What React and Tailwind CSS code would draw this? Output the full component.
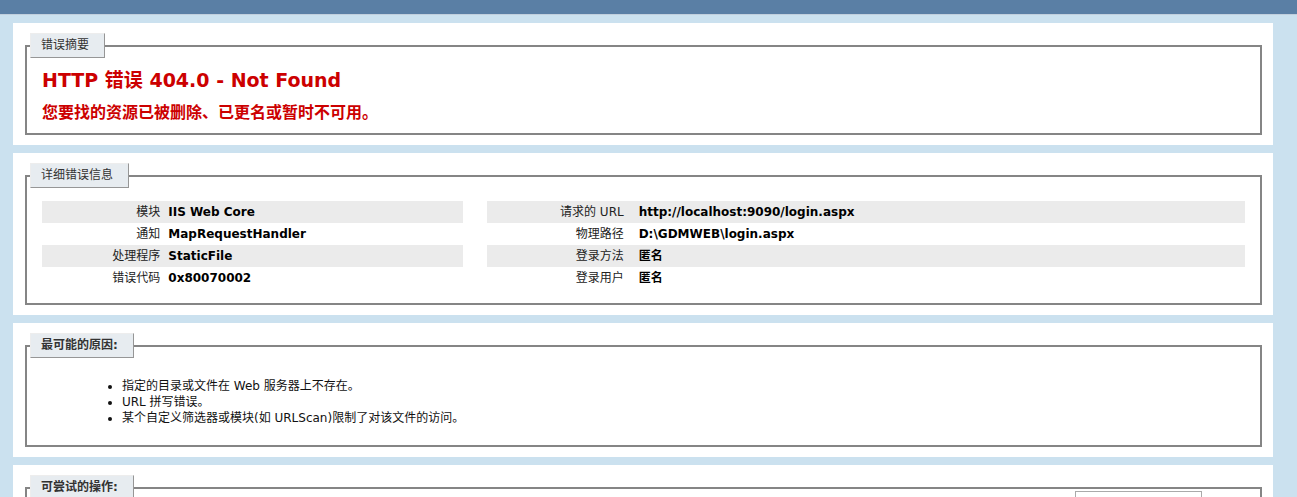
import React from "react";

const detailsLeft = [
  ["模块", "IIS Web Core"],
  ["通知", "MapRequestHandler"],
  ["处理程序", "StaticFile"],
  ["错误代码", "0x80070002"],
];
const detailsRight = [
  ["请求的 URL", "http://localhost:9090/login.aspx"],
  ["物理路径", "D:\\GDMWEB\\login.aspx"],
  ["登录方法", "匿名"],
  ["登录用户", "匿名"],
];

function Legend({ children, bold }) {
  return (
    <legend
      className={
        "ml-[-12px] pl-[10px] pr-[15px] py-[4px] bg-[#E7ECF0] border border-t-[#EDEDED] border-l-[#EDEDED] border-r-[#969696] border-b-[#969696] text-[#333333] text-[12px] leading-[15px] " +
        (bold ? "font-bold" : "font-normal")
      }
    >
      {children}
    </legend>
  );
}

function Table({ rows, thWidth, padRight }) {
  return (
    <div className="mt-[13px] mb-[4px]">
      {rows.map(([k, v], i) => (
        <div key={k} className={"flex py-[3px] " + (i % 2 === 0 ? "bg-[#EBEBEB]" : "")}>
          <div className={"shrink-0 text-right text-[12px] leading-[16px] text-[#222] " + thWidth + " " + padRight}>{k}</div>
          <div className="text-[12px] leading-[16px] font-bold text-black whitespace-nowrap">{v}</div>
        </div>
      ))}
    </div>
  );
}

export default function App() {
  return (
    <div className="min-h-screen bg-[#CBE1EF] font-['DejaVu_Sans','Noto_Sans_CJK_SC',sans-serif] text-black pb-[40px]">
      <div className="h-[15px] bg-[#5A7FA5] border-b border-[#C1CFDD]" />
      <div className="pl-[13px] pr-[24px]">
        {/* Summary */}
        <div className="mt-[8px] bg-white p-[10px]">
          <fieldset className="border-2 border-[#858585] px-[15px] pb-[10px] mx-[2px] mr-[1px]">
            <Legend>错误摘要</Legend>
            <h2 className="mt-[10px] text-[19px] leading-[24px] font-bold text-[#CC0000]">HTTP 错误 404.0 - Not Found</h2>
            <h3 className="mt-[11px] text-[16px] leading-[20px] font-bold text-[#CC0000]">您要找的资源已被删除、已更名或暂时不可用。</h3>
          </fieldset>
        </div>

        {/* Details */}
        <div className="mt-[8px] bg-white p-[10px]">
          <fieldset className="border-2 border-[#858585] px-[15px] pb-[10px] mx-[2px] mr-[1px]">
            <Legend>详细错误信息</Legend>
            <div className="flex">
              <div className="w-[35%] mr-[2%]">
                <Table rows={detailsLeft} thWidth="w-[30%]" padRight="pr-[8px]" />
              </div>
              <div className="w-[63%]">
                <Table rows={detailsRight} thWidth="w-[20%]" padRight="pr-[15px]" />
              </div>
            </div>
          </fieldset>
        </div>

        {/* Causes */}
        <div className="mt-[8px] bg-white p-[10px]">
          <fieldset className="border-2 border-[#858585] px-[15px] pb-[10px] mx-[2px] mr-[1px]">
            <Legend bold>最可能的原因:</Legend>
            <ul className="list-disc mt-[20px] mb-[9px] ml-[40px] pl-[40px] text-[12px] leading-[16px] text-[#111]">
              <li>指定的目录或文件在 Web 服务器上不存在。</li>
              <li>URL 拼写错误。</li>
              <li>某个自定义筛选器或模块(如 URLScan)限制了对该文件的访问。</li>
            </ul>
          </fieldset>
        </div>

        {/* Things to try */}
        <div className="relative mt-[8px] bg-white p-[10px]">
          <fieldset className="border-2 border-[#858585] px-[15px] pb-[10px] mx-[2px] mr-[1px]">
            <Legend bold>可尝试的操作:</Legend>
            <ul className="list-disc mt-[20px] mb-[10px] ml-[40px] pl-[40px] text-[12px] leading-[16px] text-[#111]">
              <li>在 Web 服务器上创建内容。</li>
              <li>检查浏览器 URL。</li>
              <li>创建跟踪规则以跟踪此 HTTP 状态代码的失败的请求，并查看是哪个模块在调用 SetStatus。</li>
            </ul>
          </fieldset>
          <div className="absolute right-[71px] top-[26px] w-[127px] h-[30px] border border-[#AAAAAA] bg-white" />
        </div>
      </div>
    </div>
  );
}
